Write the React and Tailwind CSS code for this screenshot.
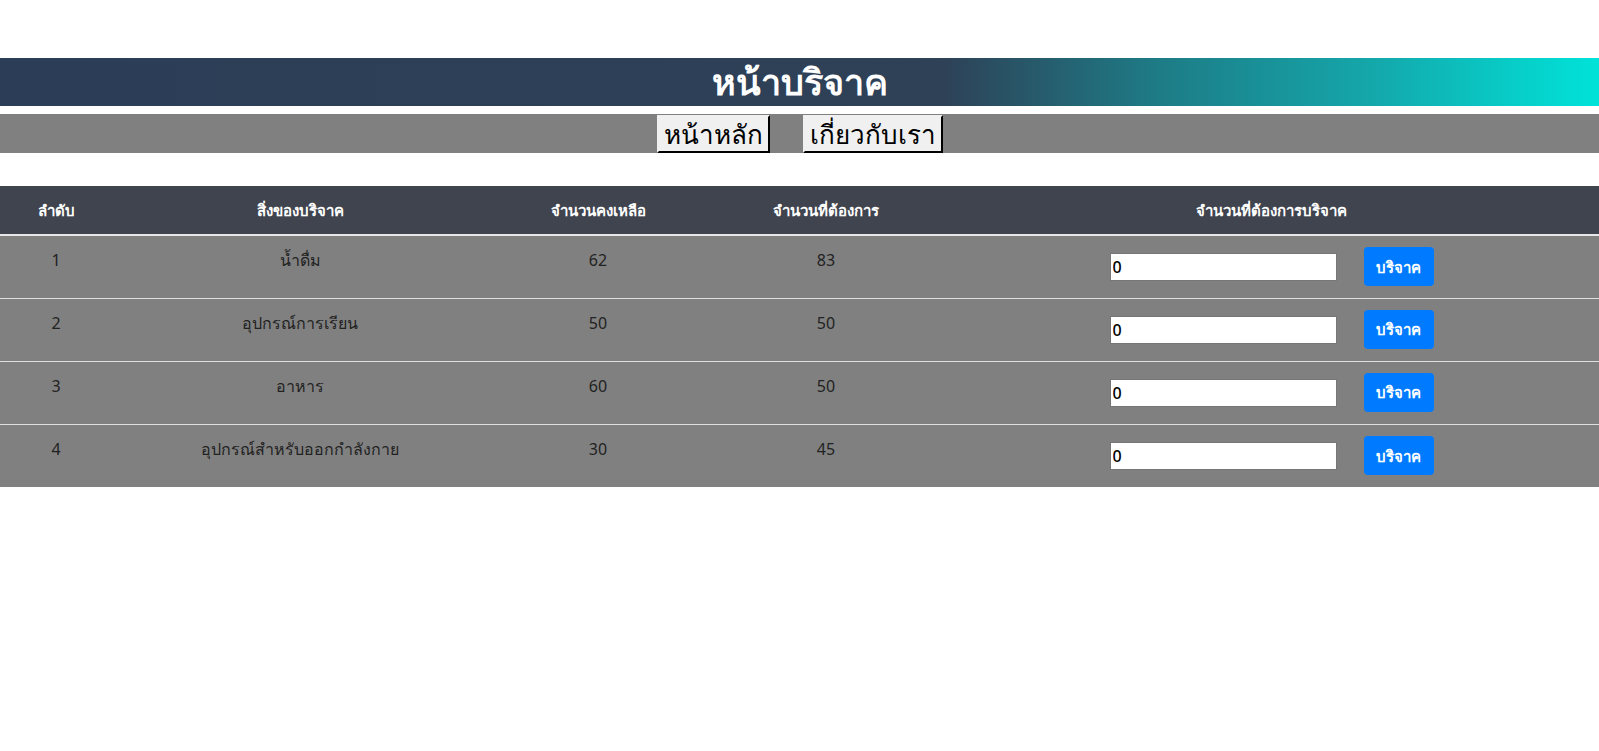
const items = [
  { id: 1, name: "น้ำดื่ม", left: "62", need: "83" },
  { id: 2, name: "อุปกรณ์การเรียน", left: "50", need: "50" },
  { id: 3, name: "อาหาร", left: "60", need: "50" },
  { id: 4, name: "อุปกรณ์สำหรับออกกำลังกาย", left: "30", need: "45" },
];

export default function App() {
  return (
    <div className="min-h-[751px] bg-white pt-[58px] font-['Noto_Sans','DejaVu_Sans',sans-serif]">
      <h1 className="flex h-[48px] items-center justify-center bg-[linear-gradient(90deg,#2c3e57_0%,#2e4157_59%,#1e7a85_72%,#14a8ab_86%,#00e3d9_100%)] text-[36px] font-semibold leading-none text-white">
        หน้าบริจาค
      </h1>
      <nav className="mt-2 flex h-[39px] items-center justify-center gap-[33px] bg-[#808080]">
        <button
          type="button"
          className="h-[38px] border-2 border-[#f0f0f0] border-r-black border-b-black bg-[#f0f0f0] px-[5px] text-[26px] leading-none text-black"
        >
          หน้าหลัก
        </button>
        <button
          type="button"
          className="h-[38px] border-2 border-[#f0f0f0] border-r-black border-b-black bg-[#f0f0f0] px-[5px] text-[26px] leading-none text-black"
        >
          เกี่ยวกับเรา
        </button>
      </nav>

      <table className="mt-[33px] w-full table-fixed border-collapse">
        <colgroup>
          <col className="w-[112px]" />
          <col className="w-[376px]" />
          <col className="w-[220px]" />
          <col className="w-[236px]" />
          <col />
        </colgroup>
        <thead>
          <tr className="h-[49px] border-b-2 border-[#e8e8e8] bg-[#40444e] text-[15px] font-bold text-white">
            <th className="font-bold">ลำดับ</th>
            <th className="font-bold">สิ่งของบริจาค</th>
            <th className="font-bold">จำนวนคงเหลือ</th>
            <th className="font-bold">จำนวนที่ต้องการ</th>
            <th className="font-bold">จำนวนที่ต้องการบริจาค</th>
          </tr>
        </thead>
        <tbody>
          {items.map((it, i) => (
            <tr
              key={it.id}
              className={`h-[63px] bg-[#808080] text-[16px] text-[#222] ${i < items.length - 1 ? "border-b border-[#e0e0e0]" : ""}`}
            >
              <td className="pt-[12px] text-center align-top leading-6">{it.id}</td>
              <td className="pt-[12px] text-center align-top leading-6">{it.name}</td>
              <td className="pt-[12px] text-center align-top leading-6">{it.left}</td>
              <td className="pt-[12px] text-center align-top leading-6">{it.need}</td>
              <td className="align-middle">
                <div className="flex items-center justify-center gap-[27px]">
                  <input
                    type="text"
                    defaultValue="0"
                    className="h-[28px] w-[227px] border border-[#767676] bg-white px-[2px] text-[16px] font-medium text-black outline-none"
                  />
                  <button
                    type="button"
                    className="h-[39px] w-[70px] rounded-[4px] bg-[#007bff] text-[15px] font-semibold text-white"
                  >
                    บริจาค
                  </button>
                </div>
              </td>
            </tr>
          ))}
        </tbody>
      </table>
    </div>
  );
}
